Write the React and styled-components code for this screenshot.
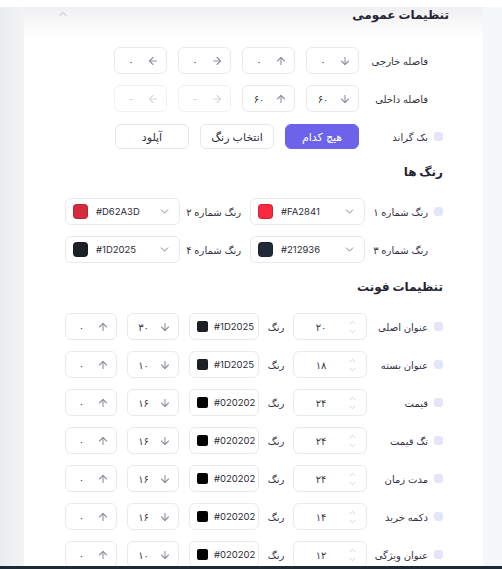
import styled, { createGlobalStyle } from 'styled-components'
import { ArrowDown, ArrowUp, ArrowLeft, ArrowRight, ChevronDown, ChevronUp } from 'lucide-react'

const GlobalStyle = createGlobalStyle`
  html, body {
    margin: 0;
    padding: 0;
    background: #f6f7f9;
  }
  body {
    font-family: "Inter", "DejaVu Sans", sans-serif;
    color: #2b2b36;
  }
`

const Page = styled.div`
  width: 502px;
  height: 569px;
  display: flex;
  flex-direction: column;
  overflow: hidden;
`

const TopBar = styled.div`
  height: 7px;
  flex-shrink: 0;
  background: #fff;
`

const BottomBar = styled.div`
  height: 3px;
  flex-shrink: 0;
  background: #1c2a33;
`

const Main = styled.div`
  flex: 1;
  min-height: 0;
  display: flex;
  overflow: hidden;
`

const Gutter = styled.div`
  width: ${(p) => p.$w}px;
  flex-shrink: 0;
  background: ${(p) => (p.$left ? 'linear-gradient(to right, #ebecef, #f3f4f6)' : '#f6f7f9')};
`

const Card = styled.div`
  width: 459px;
  flex-shrink: 0;
  box-sizing: border-box;
  padding-right: 40px;
  direction: rtl;
  overflow: hidden;
  background: linear-gradient(#f0f0f2, #fff 32px);
`

const Header = styled.div`
  height: 20px;
  margin-top: -3px;
  margin-right: -6px;
  padding-left: 33px;
  display: flex;
  align-items: center;
  justify-content: space-between;
`

const CardTitle = styled.div`
  font-size: 12px;
  font-weight: 700;
  color: #262633;
`

const SectionTitle = styled.div`
  height: 20px;
  line-height: 20px;
  font-size: 12px;
  font-weight: 700;
  color: #262633;
  margin: ${(p) => p.$m};
`

const Rows = styled.div`
  display: flex;
  flex-direction: column;
  gap: ${(p) => p.$gap}px;
  margin-top: ${(p) => p.$top || 0}px;
`

const Row = styled.div`
  display: flex;
  align-items: center;
  height: 27px;
`

const LabelCell = styled.div`
  width: ${(p) => p.$w}px;
  flex-shrink: 0;
  display: flex;
  align-items: center;
  gap: 6px;
  font-size: 10px;
  color: #33333f;
  white-space: nowrap;
`

const Check = styled.span`
  width: 9px;
  height: 9px;
  border-radius: 3px;
  flex-shrink: 0;
  background: ${(p) => (p.$on ? '#e3e5f8' : 'transparent')};
`

const Group = styled.div`
  display: flex;
  align-items: center;
  gap: ${(p) => p.$gap}px;
`

const Box = styled.div`
  width: ${(p) => p.$w}px;
  height: 27px;
  box-sizing: border-box;
  border: 1px solid ${(p) => (p.$disabled ? '#f1f1f4' : '#e9e9ee')};
  border-radius: 6px;
  background: #fff;
  display: flex;
  align-items: center;
  flex-shrink: 0;
`

const ArrowBox = styled(Box)`
  padding: 0 7px 0 0;
  color: ${(p) => (p.$disabled ? '#d6d7dc' : '#8e929c')};
`

const Value = styled.span`
  flex: 1;
  text-align: center;
  font-size: 10px;
  color: ${(p) => (p.$disabled ? '#c9cad0' : '#3a3a46')};
`

const StepBox = styled(Box)`
  padding-right: 9px;
`

const StepIcons = styled.div`
  display: flex;
  flex-direction: column;
  color: #b5b8c2;
  line-height: 0;
`

const Button = styled.div`
  width: 74px;
  height: 25px;
  box-sizing: border-box;
  border-radius: 6px;
  display: flex;
  align-items: center;
  justify-content: center;
  font-size: 11px;
  border: 1px solid ${(p) => (p.$primary ? '#6c63ea' : '#e6e6eb')};
  background: ${(p) => (p.$primary ? '#6c63ea' : '#fff')};
  color: ${(p) => (p.$primary ? '#fff' : '#2f2f3a')};
`

const ColorBox = styled(Box)`
  direction: ltr;
  padding: 0 8px 0 7px;
  gap: ${(p) => p.$gap || 8}px;
`

const Swatch = styled.span`
  width: ${(p) => p.$size}px;
  height: ${(p) => p.$size}px;
  border-radius: ${(p) => (p.$size > 12 ? 4 : 2)}px;
  background: ${(p) => p.$color};
  border: 1px solid rgba(0, 0, 0, 0.15);
  box-sizing: border-box;
  flex-shrink: 0;
`

const Hex = styled.span`
  font-size: 9.5px;
  color: #2b2b36;
  flex: 1;
  white-space: nowrap;
`

const SelectChevron = styled(ChevronDown)`
  color: #707480;
`

const MidLabel = styled.div`
  width: ${(p) => p.$w}px;
  flex-shrink: 0;
  font-size: 10px;
  color: #33333f;
  text-align: ${(p) => p.$align || 'center'};
  padding-right: ${(p) => p.$pr || 0}px;
  box-sizing: border-box;
  white-space: nowrap;
`

const ArrowInput = ({ icon: Icon, value, disabled, w = 53 }) => (
  <ArrowBox $w={w} $disabled={disabled}>
    <Icon size={12} strokeWidth={2.2} />
    <Value $disabled={disabled}>{value}</Value>
  </ArrowBox>
)

const ColorSelect = ({ color }) => (
  <ColorBox $w={115}>
    <Swatch $size={15} $color={color} />
    <Hex>{color}</Hex>
    <SelectChevron size={13} strokeWidth={1.6} />
  </ColorBox>
)

const fontRows = [
  ['عنوان اصلی', '۲۰', '#1D2025', '۳۰'],
  ['عنوان بسته', '۱۸', '#1D2025', '۱۰'],
  ['قیمت', '۲۴', '#020202', '۱۶'],
  ['تگ قیمت', '۲۴', '#020202', '۱۶'],
  ['مدت زمان', '۲۴', '#020202', '۱۶'],
  ['دکمه خرید', '۱۴', '#020202', '۱۶'],
  ['عنوان ویژگی', '۱۲', '#020202', '۱۰'],
]

export default function App() {
  return (
    <>
      <GlobalStyle />
      <Page>
        <TopBar />
        <Main>
          <Gutter $w={24} $left />
          <Card>
            <Header>
              <CardTitle>تنظیمات عمومی</CardTitle>
              <ChevronUp size={12} strokeWidth={2} color="#b7b9cc" />
            </Header>

            <Rows $gap={11} $top={23}>
              <Row>
                <LabelCell $w={84}>
                  <Check />
                  فاصله خارجی
                </LabelCell>
                <Group $gap={11}>
                  <ArrowInput icon={ArrowDown} value="۰" />
                  <ArrowInput icon={ArrowUp} value="۰" />
                  <ArrowInput icon={ArrowRight} value="۰" />
                  <ArrowInput icon={ArrowLeft} value="۰" />
                </Group>
              </Row>
              <Row>
                <LabelCell $w={84}>
                  <Check />
                  فاصله داخلی
                </LabelCell>
                <Group $gap={11}>
                  <ArrowInput icon={ArrowDown} value="۶۰" />
                  <ArrowInput icon={ArrowUp} value="۶۰" />
                  <ArrowInput icon={ArrowRight} value="-" disabled />
                  <ArrowInput icon={ArrowLeft} value="-" disabled />
                </Group>
              </Row>
              <Row>
                <LabelCell $w={84}>
                  <Check $on />
                  بک گراند
                </LabelCell>
                <Group $gap={11}>
                  <Button $primary>هیچ کدام</Button>
                  <Button>انتخاب رنگ</Button>
                  <Button>آپلود</Button>
                </Group>
              </Row>
            </Rows>

            <SectionTitle $m="12px 0 16px">رنگ ها</SectionTitle>
            <Rows $gap={11}>
              <Row>
                <LabelCell $w={78}>
                  <Check $on />
                  رنگ شماره ۱
                </LabelCell>
                <ColorSelect color="#FA2841" />
                <MidLabel $w={70} $align="right" $pr={9}>رنگ شماره ۲</MidLabel>
                <ColorSelect color="#D62A3D" />
              </Row>
              <Row>
                <LabelCell $w={78}>
                  <Check />
                  رنگ شماره ۳
                </LabelCell>
                <ColorSelect color="#212936" />
                <MidLabel $w={70} $align="right" $pr={9}>رنگ شماره ۴</MidLabel>
                <ColorSelect color="#1D2025" />
              </Row>
            </Rows>

            <SectionTitle $m="14px 0 16px">تنظیمات فونت</SectionTitle>
            <Rows $gap={11}>
              {fontRows.map(([label, size, color, lh]) => (
                <Row key={label}>
                  <LabelCell $w={76}>
                    <Check $on />
                    {label}
                  </LabelCell>
                  <StepBox $w={74}>
                    <StepIcons>
                      <ChevronUp size={9} strokeWidth={1.6} />
                      <ChevronDown size={9} strokeWidth={1.6} />
                    </StepIcons>
                    <Value>{size}</Value>
                  </StepBox>
                  <MidLabel $w={34}>رنگ</MidLabel>
                  <Group $gap={10}>
                    <ColorBox $w={70} $gap={6}>
                      <Swatch $size={11} $color={color} />
                      <Hex>{color}</Hex>
                    </ColorBox>
                    <ArrowInput icon={ArrowDown} value={lh} w={52} />
                    <ArrowInput icon={ArrowUp} value="۰" w={52} />
                  </Group>
                </Row>
              ))}
            </Rows>
          </Card>
          <Gutter $w={19} />
        </Main>
        <BottomBar />
      </Page>
    </>
  )
}
